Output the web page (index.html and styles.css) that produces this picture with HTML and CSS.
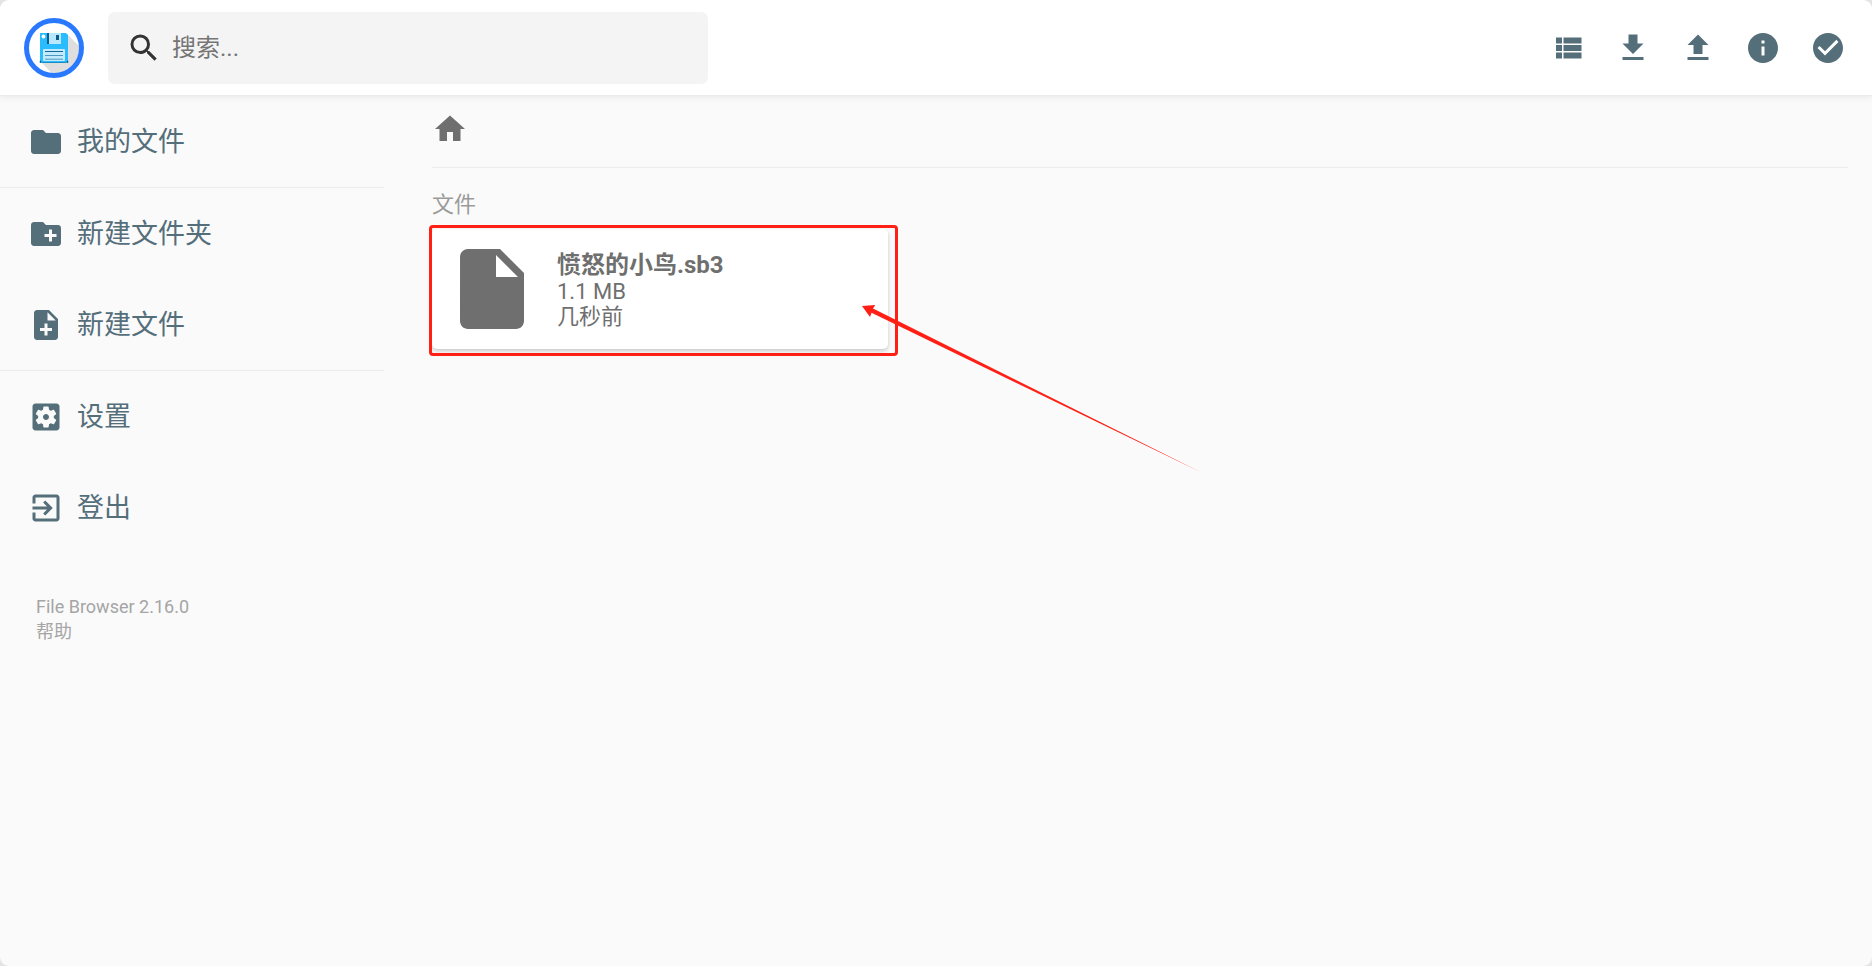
FILE: index.html
```html
<!DOCTYPE html>
<html lang="zh-CN">
<head>
<meta charset="utf-8">
<meta name="viewport" content="width=device-width, initial-scale=1">
<title>File Browser</title>
<link rel="stylesheet" href="styles.css">
</head>
<body>
<div class="app">
  <header class="header">
    <svg class="logo" viewBox="0 0 60 60" role="img" aria-label="File Browser">
      <defs><clipPath id="disc"><circle cx="30" cy="30" r="26"/></clipPath></defs>
      <circle cx="30" cy="30" r="27.5" fill="#fff"/>
      <path d="M43 16L70 43V70H42L17 44z" fill="#dedede" clip-path="url(#disc)"/>
      <path d="M16 15h26l2 2v28H16z" fill="#29bcff"/>
      <path d="M23 15h2v11h-2z" fill="#0c5a8c"/>
      <path d="M25 15h12v11H25z" fill="#b9e7fc"/>
      <path d="M32 17h3v5h-3z" fill="#0c5a8c"/>
      <circle cx="19.5" cy="18.5" r="1.9" fill="#fff"/>
      <rect x="19" y="31" width="22" height="12" rx="1" fill="#c2eafc"/>
      <path d="M21 33.5h18" stroke="#10679a" stroke-width="1.2"/>
      <path d="M21 37.5h18M21 41.2h18" stroke="#4a98bd"/>
      <path d="M16 43h1v1.500h-1zM43 43h1v1.500h-1zM18 44.500h24" stroke="#1479ac" stroke-width=".7"/>
      <circle cx="30" cy="30" r="27.500" fill="none" stroke="#2979ff" stroke-width="5"/>
    </svg>
    <form class="search" role="search">
      <svg class="icon" viewBox="0 0 24 24" aria-hidden="true"><path d="M15.500 14h-.79l-.28-.27A6.471 6.471 0 0 0 16 9.500 6.500 6.500 0 1 0 9.500 16c1.610 0 3.090-.59 4.230-1.570l.27.28v.79l5 4.990L20.490 19l-4.990-5zm-6 0C7.010 14 5 11.990 5 9.500S7.010 5 9.500 5 14 7.010 14 9.500 11.990 14 9.500 14z"/></svg>
      <input class="search-input" type="text" aria-label="搜索" placeholder="搜索...">
    </form>
    <div class="actions">
      <button class="action" type="button" aria-label="切换视图"><svg class="icon" viewBox="0 0 24 24"><path d="M4 14h4v-4H4v4zm0 5h4v-4H4v4zM4 9h4V5H4v4zm5 5h12v-4H9v4zm0 5h12v-4H9v4zM9 5v4h12V5H9z"/></svg></button>
      <button class="action" type="button" aria-label="下载"><svg class="icon" viewBox="0 0 24 24"><path d="M19 9h-4V3H9v6H5l7 7 7-7zM5 18v2h14v-2H5z"/></svg></button>
      <button class="action" type="button" aria-label="上传"><svg class="icon" viewBox="0 0 24 24"><path d="M9 16h6v-6h4l-7-7-7 7h4zm-4 2h14v2H5z"/></svg></button>
      <button class="action" type="button" aria-label="信息"><svg class="icon" viewBox="0 0 24 24"><path d="M12 2C6.480 2 2 6.480 2 12s4.480 10 10 10 10-4.480 10-10S17.520 2 12 2zm1 15h-2v-6h2v6zm0-8h-2V7h2v2z"/></svg></button>
      <button class="action" type="button" aria-label="选择多个"><svg class="icon" viewBox="0 0 24 24"><path d="M12 2C6.480 2 2 6.480 2 12s4.480 10 10 10 10-4.480 10-10S17.520 2 12 2zm-2 15l-5-5 1.410-1.410L10 14.170l7.590-7.590L19 8l-9 9z"/></svg></button>
    </div>
  </header>

  <div class="body">
    <nav class="sidebar">
      <div class="group">
        <button class="nav-item" type="button"><svg class="icon" viewBox="0 0 24 24"><path d="M10 4H4c-1.100 0-1.990.9-1.990 2L2 18c0 1.100.9 2 2 2h16c1.100 0 2-.9 2-2V8c0-1.100-.9-2-2-2h-8l-2-2z"/></svg><span class="nav-label">我的文件</span></button>
      </div>
      <div class="group">
        <button class="nav-item" type="button"><svg class="icon" viewBox="0 0 24 24"><path d="M20 6h-8l-2-2H4c-1.110 0-1.990.89-1.990 2L2 18c0 1.110.89 2 2 2h16c1.110 0 2-.89 2-2V8c0-1.110-.89-2-2-2zm-1 8h-3v3h-2v-3h-3v-2h3V9h2v3h3v2z"/></svg><span class="nav-label">新建文件夹</span></button>
        <button class="nav-item" type="button"><svg class="icon" viewBox="0 0 24 24"><path d="M14 2H6c-1.100 0-1.990.9-1.990 2L4 20c0 1.100.89 2 1.990 2H18c1.100 0 2-.9 2-2V8l-6-6zm2 14h-3v3h-2v-3H8v-2h3v-3h2v3h3v2zm-3-7V3.500L18.500 9H13z"/></svg><span class="nav-label">新建文件</span></button>
      </div>
      <div class="group">
        <button class="nav-item" type="button"><svg class="icon" viewBox="0 0 24 24"><path d="M12 10c-1.100 0-2 .9-2 2s.9 2 2 2 2-.9 2-2-.9-2-2-2zm7-7H5c-1.110 0-2 .9-2 2v14c0 1.100.89 2 2 2h14c1.110 0 2-.9 2-2V5c0-1.100-.89-2-2-2zm-1.750 9c0 .23-.02.46-.05.68l1.480 1.160c.13.11.17.3.08.45l-1.400 2.420c-.09.15-.27.21-.43.15l-1.740-.7c-.36.28-.76.51-1.180.69l-.26 1.850c-.03.17-.18.3-.35.3h-2.800c-.17 0-.32-.13-.35-.29l-.26-1.850c-.43-.18-.82-.41-1.180-.69l-1.740.7c-.16.06-.34 0-.43-.15l-1.400-2.420c-.09-.15-.05-.34.08-.45l1.480-1.160c-.03-.23-.05-.46-.05-.69 0-.23.02-.46.05-.68l-1.480-1.160c-.13-.11-.17-.3-.08-.45l1.400-2.420c.09-.15.27-.21.43-.15l1.740.7c.36-.28.76-.51 1.180-.69l.26-1.850c.03-.17.18-.3.35-.3h2.800c.17 0 .32.13.35.29l.26 1.850c.43.18.82.41 1.180.69l1.740-.7c.16-.06.34 0 .43.15l1.400 2.420c.09.15.05.34-.08.45l-1.480 1.160c.03.23.05.46.05.69z"/></svg><span class="nav-label">设置</span></button>
        <button class="nav-item" type="button"><svg class="icon" viewBox="0 0 24 24"><path d="M10.090 15.590L11.500 17l5-5-5-5-1.410 1.410L12.670 11H3v2h9.670l-2.580 2.590zM19 3H5c-1.110 0-2 .9-2 2v4h2V5h14v14H5v-4H3v4c0 1.100.89 2 2 2h14c1.100 0 2-.9 2-2V5c0-1.100-.9-2-2-2z"/></svg><span class="nav-label">登出</span></button>
      </div>
      <div class="credits">
        <a class="credit" href="#about">File Browser 2.16.0</a>
        <a class="credit" href="#help">帮助</a>
      </div>
    </nav>

    <main class="main">
      <div class="breadcrumbs">
        <a class="home" href="#files" aria-label="主页"><svg class="icon" viewBox="0 0 24 24"><path d="M10 20v-6h4v6h5v-8h3L12 3 2 12h3v8z"/></svg></a>
      </div>
      <h2 class="section-title">文件</h2>
      <div class="listing">
        <div class="item">
          <a class="card" href="#file">
            <svg class="file-icon" viewBox="0 0 24 24" aria-hidden="true"><path d="M6 2c-1.100 0-1.990.9-1.990 2L4 20c0 1.100.89 2 1.990 2H18c1.100 0 2-.9 2-2V8l-6-6H6zm7 7V3.500L18.500 9H13z"/></svg>
            <span class="details">
              <span class="name">愤怒的小鸟.sb3</span>
              <span class="meta">1.1 MB</span>
              <span class="meta">几秒前</span>
            </span>
          </a>
          <div class="highlight"></div>
          <svg class="arrow" viewBox="0 0 340 176" aria-hidden="true"><path d="M0 7L13.300 6L11 9.500L339 173.300L9.500 13.800L8 18z"/></svg>
        </div>
      </div>
    </main>
  </div>
</div>
</body>
</html>
```
FILE: styles.css
```css
* {
  box-sizing: border-box;
}

html {
  background: #e4e4e4;
}

body {
  margin: 0;
  font-family: Roboto, "Noto Sans CJK SC", sans-serif;
  color: #6f6f6f;
}

a {
  color: inherit;
  text-decoration: none;
}

button {
  border: 0;
  background: none;
  font: inherit;
  color: #546e7a;
  cursor: pointer;
}

.app {
  display: flex;
  flex-direction: column;
  min-height: 100vh;
  overflow: hidden;
  border-radius: 9px;
  background: #fafafa;
}

.icon {
  flex: none;
  display: block;
  width: 36px;
  height: 36px;
  fill: currentColor;
}

.header {
  position: relative;
  display: flex;
  align-items: center;
  height: 96px;
  padding: 0 14px 0 24px;
  border-bottom: 1px solid #ececec;
  background: #fff;
  box-shadow: 0 0 8px rgba(0, 0, 0, 0.1);
}

.logo {
  flex: none;
  width: 60px;
  height: 60px;
}

.search {
  display: flex;
  align-items: center;
  gap: 10px;
  flex: 0 1 600px;
  height: 72px;
  margin-left: 24px;
  padding: 0 18px;
  border-radius: 7px;
  background: #f4f4f4;
  color: #333;
}

.search-input {
  flex: 1;
  min-width: 0;
  padding: 0;
  border: 0;
  outline: 0;
  background: none;
  font: inherit;
  font-size: 24px;
  color: #333;
}

.search-input::placeholder {
  color: #757575;
}

.actions {
  display: flex;
  gap: 5px;
  margin-left: auto;
}

.action {
  display: grid;
  place-items: center;
  width: 60px;
  height: 60px;
  padding: 0;
  border-radius: 50%;
}

.body {
  display: flex;
  flex: 1;
}

.sidebar {
  flex: none;
  width: 384px;
}

.group + .group {
  border-top: 1px solid #ececec;
}

.nav-item {
  display: flex;
  align-items: center;
  gap: 13px;
  width: 100%;
  height: 91px;
  padding: 0 28px;
  font-size: 27px;
  text-align: left;
}

.nav-label {
  padding-bottom: 4px;
}

.credits {
  display: flex;
  flex-direction: column;
  padding: 41px 36px;
  font-size: 18px;
  line-height: 25px;
  color: #a5a5a5;
}

.main {
  flex: 1;
  min-width: 0;
  padding: 0 24px 24px 48px;
}

.breadcrumbs {
  display: flex;
  align-items: center;
  height: 72px;
  padding-bottom: 6px;
  border-bottom: 1px solid #ececec;
}

.section-title {
  margin: 20px 0 8px;
  font-size: 22px;
  font-weight: 400;
  line-height: 33px;
  color: #9b9b9b;
}

.listing {
  display: grid;
  grid-template-columns: repeat(3, 1fr);
  gap: 24px;
}

.item {
  position: relative;
}

.card {
  display: flex;
  align-items: center;
  gap: 17px;
  padding: 12px;
  border-radius: 5px;
  background: #fff;
  box-shadow: 0 2px 4px rgba(0, 0, 0, 0.2);
}

.file-icon {
  flex: none;
  width: 96px;
  height: 96px;
  fill: currentColor;
}

.details {
  display: flex;
  flex-direction: column;
  padding-top: 1px;
}

.name {
  font-size: 24px;
  font-weight: 700;
  line-height: 28px;
}

.meta {
  font-size: 22px;
  line-height: 25px;
}

.highlight {
  position: absolute;
  inset: -4px -10px -7px -3px;
  border: 3px solid #ff1f14;
  border-radius: 4px;
  pointer-events: none;
}

.arrow {
  position: absolute;
  top: 70px;
  left: 430px;
  width: 340px;
  height: 176px;
  fill: #ff1f14;
  pointer-events: none;
}
```
